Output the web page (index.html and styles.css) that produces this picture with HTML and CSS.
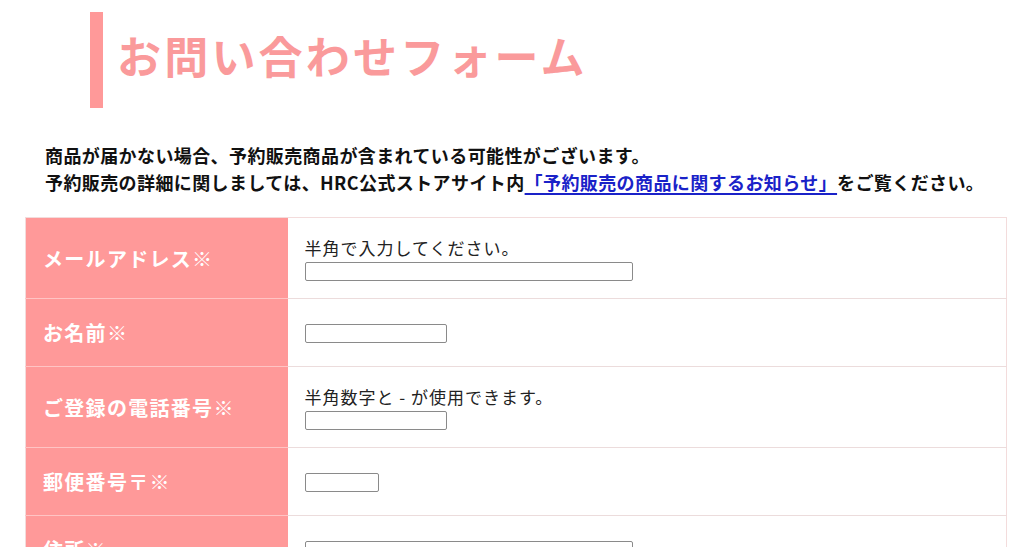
FILE: index.html
```html
<!doctype html>
<html lang="ja">
<head>
    <meta charset="UTF-8">
    <meta name="viewport" content="width=device-width, initial-scale=1.0">
    <title>お問い合わせフォーム</title>
    <link rel="stylesheet" href="styles.css">
</head>
<body>
<div class="page">
    <h1 class="formTitle">お問い合わせフォーム</h1>

    <p class="notice">
        商品が届かない場合、予約販売商品が含まれている可能性がございます。<br>
        予約販売の詳細に関しましては、HRC公式ストアサイト内<a href="#">「予約販売の商品に関するお知らせ」</a>をご覧ください。
    </p>

    <form class="contactForm">
        <table class="formTable">
            <tr>
                <th>メールアドレス※</th>
                <td>
                    <div class="hint">半角で入力してください。</div>
                    <input type="text" class="long">
                </td>
            </tr>
            <tr>
                <th>お名前※</th>
                <td><input type="text" class="middle"></td>
            </tr>
            <tr>
                <th>ご登録の電話番号※</th>
                <td>
                    <div class="hint">半角数字と - が使用できます。</div>
                    <input type="text" class="middle">
                </td>
            </tr>
            <tr>
                <th>郵便番号〒※</th>
                <td><input type="text" class="short"></td>
            </tr>
            <tr>
                <th>住所※</th>
                <td><input type="text" class="long"></td>
            </tr>
        </table>
    </form>
</div>
</body>
</html>
```

FILE: styles.css
```css
* {
    margin: 0;
    padding: 0;
    box-sizing: border-box;
}
body {
    font-family: "Noto Sans CJK JP", "Noto Sans", sans-serif;
    background: #ffffff;
    color: #222;
}
.page {
    padding: 12px 18px 0 25px;
}
/* 見出し */
.formTitle {
    margin-left: 65px;
    border-left: 13px solid #ff9999;
    padding: 14px 0 24px 14px;
    font-size: 44px;
    line-height: 58px;
    font-weight: bold;
    color: #fa9a9b;
    letter-spacing: 3.2px;
}
.notice {
    margin: 34px 0 21px 20px;
    font-size: 18px;
    line-height: 27px;
    font-weight: bold;
    color: #111;
    letter-spacing: 0.4px;
}
.notice a {
    color: #1a22c8;
    text-decoration: underline;
    text-underline-offset: 3px;
    text-decoration-thickness: 2px;
}
/* フォーム */
.formTable {
    width: 982px;
    border-collapse: collapse;
    border: 1px solid #f3dcdc;
}
.formTable tr {
    border-bottom: 1px solid #ecdcdc;
}
.formTable th {
    width: 262px;
    background: #ff9999;
    color: #fff;
    text-align: left;
    font-size: 20px;
    line-height: 27px;
    font-weight: bold;
    letter-spacing: 1.3px;
    padding: 20px 17px;
    vertical-align: middle;
    border-bottom: 1px solid #ffc4c4;
}
.formTable td {
    padding: 19px 17px 17px;
    vertical-align: middle;
    font-size: 17px;
    line-height: 22px;
    color: #222;
}
.formTable .hint {
    letter-spacing: 1px;
    margin-bottom: 3px;
}
.formTable input {
    display: block;
    height: 19px;
    border: 1px solid #8a8a8a;
    border-radius: 2px;
    background: #fff;
}
.formTable input.long {
    width: 328px;
}
.formTable input.middle {
    width: 142px;
}
.formTable input.short {
    width: 74px;
}
```
